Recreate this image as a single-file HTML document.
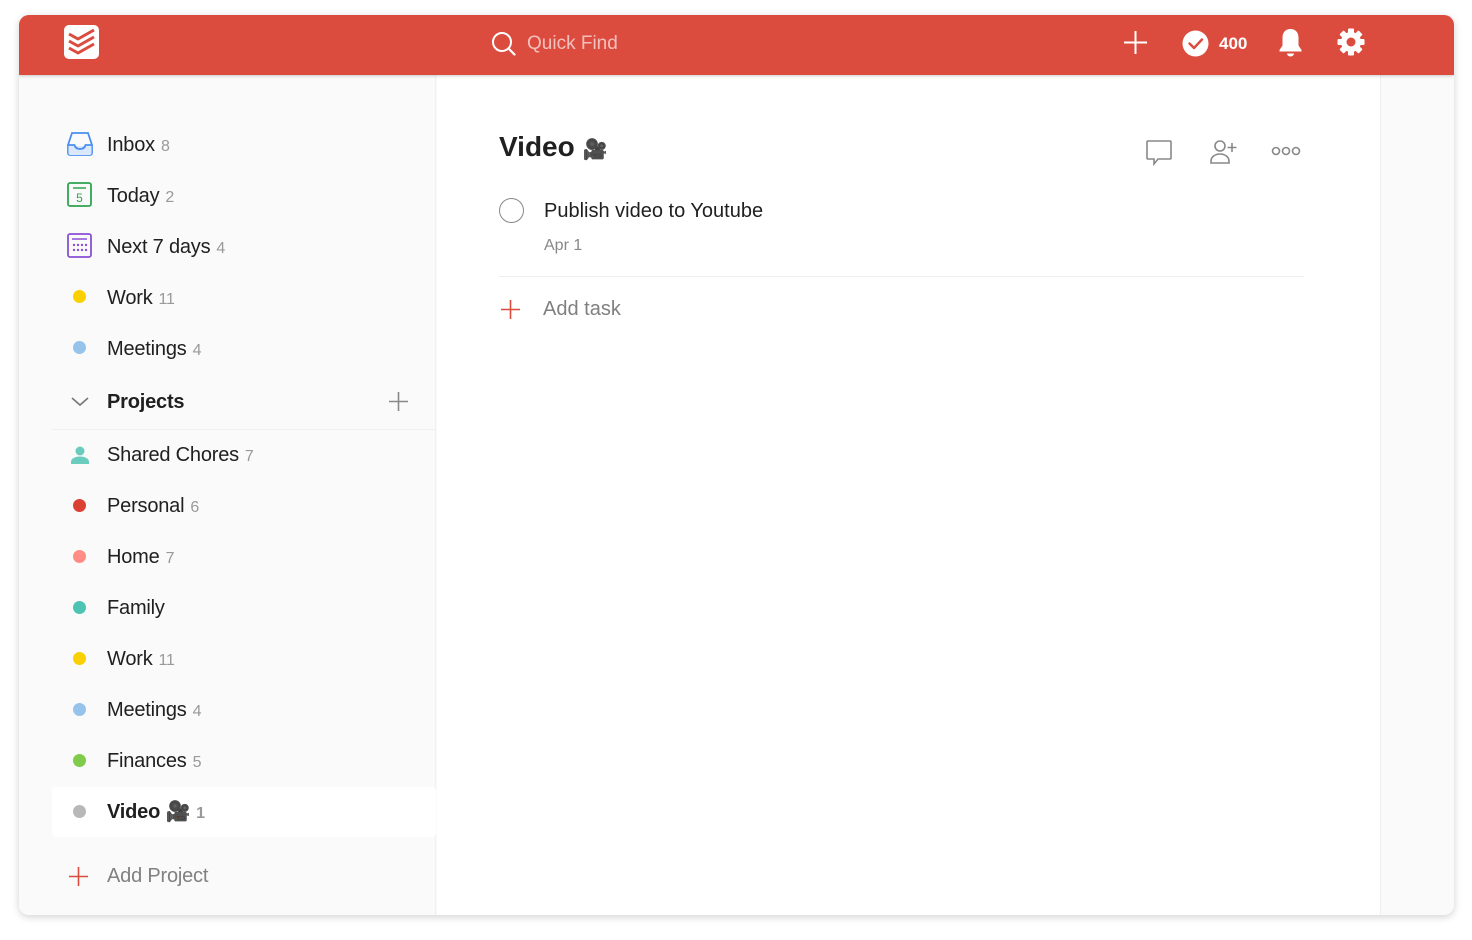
<!DOCTYPE html>
<html><head><meta charset="utf-8"><style>
*{margin:0;padding:0;box-sizing:border-box}
body{width:1472px;height:940px;background:#fff;font-family:"Liberation Sans","DejaVu Sans",sans-serif;position:relative;overflow:hidden;color:#202020}
.win{position:absolute;left:19px;top:15px;width:1435px;height:900px;border-radius:10px;overflow:hidden;background:#fafafa;box-shadow:0 2px 8px rgba(0,0,0,.18)}
.hdr{position:absolute;left:0;top:0;width:100%;height:60px;background:#db4c3f;box-shadow:0 1px 3px rgba(0,0,0,.2);z-index:2}
.side{position:absolute;left:0;top:60px;width:417px;height:840px;background:#fafafa;border-right:1px solid #f0f0f0}
.main{position:absolute;left:418px;top:60px;width:944px;height:840px;background:#fff;border-right:1px solid #eee}
.a{position:absolute}
.item{position:absolute;left:88px;font-size:20px;line-height:24px;color:#202020;letter-spacing:-0.2px}
.item .c{color:#999;font-size:16px;margin-left:6px}
.dot{position:absolute;left:54px;width:13px;height:13px;border-radius:50%}
</style></head><body>
<div class="win">
 <div class="hdr">
  <div class="a" style="left:45px;top:10px;width:35px;height:34px;background:#fff;border-radius:5px">
   <svg width="35" height="34" viewBox="0 0 35 34"><g fill="none" stroke="#db4c3f" stroke-width="3" stroke-linejoin="round"><path d="M5 9l9 5 16-9"/><path d="M5 16l9 5 16-9"/><path d="M5 23l9 5 16-9"/></g></svg>
  </div>
  <svg class="a" style="left:472px;top:16px" width="26" height="26" viewBox="0 0 26 26"><circle cx="11" cy="11" r="9" fill="none" stroke="#fff" stroke-width="2"/><path d="M17.5 17.5l6 6" stroke="#fff" stroke-width="2.2" stroke-linecap="round"/></svg>
  <div class="a" style="left:508px;top:18px;font-size:19px;color:rgba(255,255,255,.65)">Quick Find</div>
  <svg class="a" style="left:1104px;top:15px" width="25" height="25"><path d="M12.5 1v23M1 12.5h23" stroke="#fff" stroke-width="2"/></svg>
  <svg class="a" style="left:1163px;top:15px" width="27" height="27"><circle cx="13.5" cy="13.5" r="13" fill="#fff"/><path d="M7.5 13.5l4.5 4.5 8-8.5" fill="none" stroke="#db4c3f" stroke-width="2.4" stroke-linecap="round" stroke-linejoin="round"/></svg>
  <div class="a" style="left:1200px;top:19px;font-size:17px;font-weight:bold;color:#fff">400</div>
  <svg class="a" style="left:1259px;top:13px" width="25" height="30" viewBox="0 0 25 30"><path d="M12.5 1c-5 0-8 3.5-8 8.5v8L1.5 22v1.5h22V22l-3-4.5v-8c0-5-3-8.5-8-8.5z" fill="#fff"/><path d="M9 25.5h7a3.5 3 0 0 1-7 0z" fill="#fff"/></svg>
  <svg class="a" style="left:1318px;top:13px" width="28" height="28" viewBox="0 0 28 28"><g fill="#fff" transform="translate(14 14)"><circle r="10"/><g id="t"><rect x="-3" y="-13.5" width="6" height="6" rx="1"/></g><use href="#t" transform="rotate(45)"/><use href="#t" transform="rotate(90)"/><use href="#t" transform="rotate(135)"/><use href="#t" transform="rotate(180)"/><use href="#t" transform="rotate(225)"/><use href="#t" transform="rotate(270)"/><use href="#t" transform="rotate(315)"/></g><circle cx="14" cy="14" r="4.5" fill="#db4c3f"/></svg>
 </div>
 <div class="side">
  <svg class="a" style="left:48px;top:56px" width="26" height="26" viewBox="0 0 26 26"><path d="M5 2h16l4 12v8a2 2 0 0 1-2 2H3a2 2 0 0 1-2-2v-8z" fill="none" stroke="#4a8ff0" stroke-width="1.8"/><path d="M1.5 15h23v7a2 2 0 0 1-2 2h-19a2 2 0 0 1-2-2z" fill="#dbe8fb"/><path d="M1.5 14h6q1 4 5.5 4t5.5-4h6" fill="none" stroke="#4a8ff0" stroke-width="1.8"/></svg>
  <div class="item" style="top:58px">Inbox<span class="c">8</span></div>
  <svg class="a" style="left:48px;top:107px" width="26" height="26"><rect x="1" y="1" width="23" height="23" rx="2" fill="none" stroke="#2ea44f" stroke-width="1.8"/><path d="M6 6h13" stroke="#2ea44f" stroke-width="1.5"/><text x="12.5" y="20" font-size="12" fill="#2ea44f" text-anchor="middle" font-family="Liberation Sans">5</text></svg>
  <div class="item" style="top:109px">Today<span class="c">2</span></div>
  <svg class="a" style="left:48px;top:158px" width="26" height="26"><rect x="1" y="1" width="23" height="23" rx="2" fill="none" stroke="#8a4fd8" stroke-width="1.8"/><path d="M5 6h15" stroke="#8a4fd8" stroke-width="1.5"/><g fill="#8a4fd8"><circle cx="7" cy="12" r="1.2"/><circle cx="11" cy="12" r="1.2"/><circle cx="15" cy="12" r="1.2"/><circle cx="19" cy="12" r="1.2"/><circle cx="7" cy="17" r="1.2"/><circle cx="11" cy="17" r="1.2"/><circle cx="15" cy="17" r="1.2"/><circle cx="19" cy="17" r="1.2"/></g></svg>
  <div class="item" style="top:160px">Next 7 days<span class="c">4</span></div>
  <div class="dot" style="top:215px;background:#fad000"></div>
  <div class="item" style="top:211px">Work<span class="c">11</span></div>
  <div class="dot" style="top:266px;background:#96c3eb"></div>
  <div class="item" style="top:262px">Meetings<span class="c">4</span></div>
  <svg class="a" style="left:51px;top:320px" width="20" height="14"><path d="M2 3l8 7 8-7" fill="none" stroke="#777" stroke-width="1.6"/></svg>
  <div class="item" style="top:315px;font-weight:bold">Projects</div>
  <svg class="a" style="left:369px;top:316px" width="21" height="21"><path d="M10.5 1v19M1 10.5h19" stroke="#888" stroke-width="1.6"/></svg>
  <div class="a" style="left:33px;top:354px;width:384px;height:1px;background:#efefef"></div>
  <svg class="a" style="left:51px;top:370px" width="20" height="20"><circle cx="10" cy="6" r="4.5" fill="#6accbc"/><path d="M1 19v-2c0-3.5 4-5.5 9-5.5s9 2 9 5.5v2z" fill="#6accbc"/></svg>
  <div class="item" style="top:368px">Shared Chores<span class="c">7</span></div>
  <div class="dot" style="top:424px;background:#db4035"></div>
  <div class="item" style="top:419px">Personal<span class="c">6</span></div>
  <div class="dot" style="top:475px;background:#ff8d85"></div>
  <div class="item" style="top:470px">Home<span class="c">7</span></div>
  <div class="dot" style="top:526px;background:#4cc3b3"></div>
  <div class="item" style="top:521px">Family</div>
  <div class="dot" style="top:577px;background:#fad000"></div>
  <div class="item" style="top:572px">Work<span class="c">11</span></div>
  <div class="dot" style="top:628px;background:#96c3eb"></div>
  <div class="item" style="top:623px">Meetings<span class="c">4</span></div>
  <div class="dot" style="top:679px;background:#7ecc49"></div>
  <div class="item" style="top:674px">Finances<span class="c">5</span></div>
  <div class="a" style="left:33px;top:712px;width:384px;height:50px;background:#fff;border-radius:4px"></div>
  <div class="dot" style="top:730px;background:#b8b8b8"></div>
  <div class="item" style="top:725px;font-weight:bold">Video 🎥<span class="c" style="font-weight:bold">1</span></div>
  <svg class="a" style="left:49px;top:791px" width="21" height="21"><path d="M10.5 1v19M1 10.5h19" stroke="#db4c3f" stroke-width="1.6"/></svg>
  <div class="item" style="top:789px;color:#808080">Add Project</div>
 </div>
 <div class="main">
  <div class="a" style="left:62px;top:56px;font-size:28px;font-weight:bold;color:#202020">Video <span style="font-size:20px">🎥</span></div>
  <svg class="a" style="left:708px;top:64px" width="28" height="28" viewBox="0 0 28 28"><path d="M3 2h22a1 1 0 0 1 1 1v16a1 1 0 0 1-1 1H13l-4 5v-5H3a1 1 0 0 1-1-1V3a1 1 0 0 1 1-1z" fill="none" stroke="#888" stroke-width="1.6"/></svg>
  <svg class="a" style="left:773px;top:64px" width="28" height="26"><circle cx="10" cy="7" r="5" fill="none" stroke="#888" stroke-width="1.6"/><path d="M1 24v-2c0-4 4-7 9-7s9 3 9 7v2z" fill="none" stroke="#888" stroke-width="1.6"/><path d="M22 4v9M17.5 8.5h9" stroke="#888" stroke-width="1.6"/></svg>
  <svg class="a" style="left:834px;top:70px" width="30" height="12"><g fill="none" stroke="#888" stroke-width="1.6"><circle cx="5" cy="6" r="3.5"/><circle cx="15" cy="6" r="3.5"/><circle cx="25" cy="6" r="3.5"/></g></svg>
  <div class="a" style="left:62px;top:123px;width:25px;height:25px;border:1.5px solid #888;border-radius:50%"></div>
  <div class="a" style="left:107px;top:125px;font-size:20px;color:#202020">Publish video to Youtube</div>
  <div class="a" style="left:107px;top:162px;font-size:16px;color:#888">Apr 1</div>
  <div class="a" style="left:62px;top:201px;width:805px;height:1px;background:#eee"></div>
  <svg class="a" style="left:63px;top:224px" width="21" height="21"><path d="M10.5 1v19M1 10.5h19" stroke="#db4c3f" stroke-width="1.6"/></svg>
  <div class="a" style="left:106px;top:223px;font-size:20px;color:#808080">Add task</div>
 </div>
</div>
</body></html>
